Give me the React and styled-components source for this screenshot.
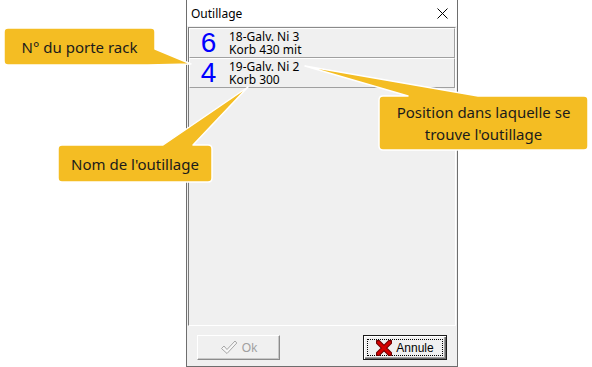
import React from 'react'
import styled, { createGlobalStyle } from 'styled-components'

const GlobalStyle = createGlobalStyle`
    body {
        margin: 0;
        background: #ffffff;
    }
`

const Page = styled.div`
    position: relative;
    width: 592px;
    height: 367px;
    overflow: hidden;
    background: #ffffff;
`

const Window = styled.div`
    margin-left: 186px;
    width: 272px;
    height: 367px;
    box-sizing: border-box;
    display: flex;
    flex-direction: column;
    background: #f0f0f0;
    border: 1px solid #6e6e6e;
    border-top: none;
    font-family: "Noto Sans", "Liberation Sans", sans-serif;
`

const TitleBar = styled.div`
    height: 26px;
    flex: none;
    display: flex;
    align-items: center;
    justify-content: space-between;
    padding-left: 4px;
    background: #ffffff;
    font-size: 12px;
    color: #000;
`

const CloseBox = styled.div`
    width: 29px;
    height: 26px;
    display: flex;
    align-items: center;
    justify-content: center;
`

const ListBox = styled.div`
    flex: 1;
    margin: 1px 1px 0 1px;
    border: 1px solid;
    border-color: #8a8a8a #ffffff #ffffff #7a7a7a;
    background: #f0f0f0;
`

const Row = styled.div`
    height: 30px;
    box-sizing: border-box;
    display: flex;
    align-items: center;
    border: 1px solid;
    border-color: #ffffff #a0a0a0 #a0a0a0 #ffffff;
    background: #f0f0f0;
`

const Num = styled.div`
    width: 37px;
    text-align: center;
    font-family: "Liberation Sans", Arial, sans-serif;
    font-size: 28px;
    line-height: 1;
    color: #0000ff;
`

const Label = styled.div`
    margin-left: 2px;
    display: flex;
    flex-direction: column;
    font-size: 12px;
    color: #000;
`

const Line = styled.span`
    height: 13px;
    line-height: 13px;
    white-space: nowrap;
`

const ButtonRow = styled.div`
    flex: none;
    display: flex;
    justify-content: space-between;
    padding: 9px 10px 6px 10px;
`

const Button = styled.div`
    width: ${p => p.$w}px;
    height: 25px;
    box-sizing: border-box;
    display: flex;
    align-items: center;
    justify-content: center;
    gap: 4px;
    font-family: "Liberation Sans", Arial, sans-serif;
    font-size: 12px;
    background: #f0f0f0;
    color: ${p => (p.$disabled ? '#a0a0a0' : '#000')};
    border: 1px solid;
    border-color: ${p => (p.$default ? '#1a1a1a' : '#ffffff #8c8c8c #8c8c8c #ffffff')};
    box-shadow: ${p =>
        p.$default
            ? 'inset 1px 1px #ffffff, inset -1px -1px #696969, inset -2px -2px #a0a0a0'
            : 'inset -1px -1px #c8c8c8'};
    padding: 3px;
`

const Focus = styled.div`
    flex: 1;
    align-self: stretch;
    display: flex;
    align-items: center;
    justify-content: center;
    gap: 4px;
    border: 1px dotted #000;
`

const Overlay = styled.svg`
    position: absolute;
    left: 0;
    top: 0;
    pointer-events: none;
`

const Note = styled.div`
    position: absolute;
    left: ${p => p.$x}px;
    top: ${p => p.$y}px;
    width: ${p => p.$w}px;
    height: ${p => p.$h}px;
    display: flex;
    align-items: center;
    justify-content: center;
    text-align: center;
    font-family: "Noto Sans", "Open Sans", sans-serif;
    font-size: 15px;
    line-height: 22px;
    color: #1b1b1b;
`

const rows = [
    { num: 6, name: '18-Galv. Ni 3', place: 'Korb 430 mit' },
    { num: 4, name: '19-Galv. Ni 2', place: 'Korb 300' },
]

const bubbles = [
    'M8,28 H151 Q155,28 155,32 V49 L191,64 L148,65 H8 Q4,65 4,61 V32 Q4,28 8,28 Z',
    'M383,96 H408 L305,66 L478,96 H584 Q588,96 588,100 V146 Q588,150 584,150 H383 Q379,150 379,146 V100 Q379,96 383,96 Z',
    'M62,145 H163 L248,87 L193,145 H208 Q212,145 212,149 V178 Q212,182 208,182 H62 Q58,182 58,178 V149 Q58,145 62,145 Z',
]

const CloseIcon = () => (
    <svg width="11" height="11" viewBox="0 0 11 11">
        <path d="M0.5,0.5 L10.5,10.5 M10.5,0.5 L0.5,10.5" stroke="#000" strokeWidth="1" />
    </svg>
)

const CheckIcon = () => (
    <svg width="18" height="15" viewBox="0 0 18 15">
        <path
            d="M1.5,8.5 L4,6 L7,9.5 L15,1 L16.8,3 L7,13.5 Z"
            fill="#f7f7f7"
            stroke="#a6a6a6"
            strokeWidth="1"
            strokeLinejoin="round"
        />
    </svg>
)

const CrossIcon = () => (
    <svg width="16" height="16" viewBox="0 0 16 16">
        <path d="M2,2 L14,14 M14,2 L2,14" stroke="#6e0000" strokeWidth="5" strokeLinecap="round" />
        <path d="M2.5,2.5 L13.5,13.5 M13.5,2.5 L2.5,13.5" stroke="#d40000" strokeWidth="3" strokeLinecap="round" />
    </svg>
)

const App = () => {
    return (
        <Page>
            <GlobalStyle />
            <Window>
                <TitleBar>
                    <span>Outillage</span>
                    <CloseBox>
                        <CloseIcon />
                    </CloseBox>
                </TitleBar>
                <ListBox>
                    {rows.map(r => (
                        <Row key={r.num}>
                            <Num>{r.num}</Num>
                            <Label>
                                <Line>{r.name}</Line>
                                <Line>{r.place}</Line>
                            </Label>
                        </Row>
                    ))}
                </ListBox>
                <ButtonRow>
                    <Button $w={83} $disabled>
                        <CheckIcon />
                        Ok
                    </Button>
                    <Button $w={84} $default>
                        <Focus>
                            <CrossIcon />
                            Annule
                        </Focus>
                    </Button>
                </ButtonRow>
            </Window>

            <Overlay width="592" height="367">
                {bubbles.map((d, i) => (
                    <path key={i} d={d} fill="#f4bd23" stroke="#ffffff" strokeWidth="1.5" strokeLinejoin="round" />
                ))}
            </Overlay>
            <Note $x={4} $y={28} $w={151} $h={37}>N° du porte rack</Note>
            <Note $x={379} $y={96} $w={209} $h={54}>
                Position dans laquelle se
                <br />
                trouve l'outillage
            </Note>
            <Note $x={58} $y={145} $w={154} $h={37}>Nom de l'outillage</Note>
        </Page>
    )
}

export default App
